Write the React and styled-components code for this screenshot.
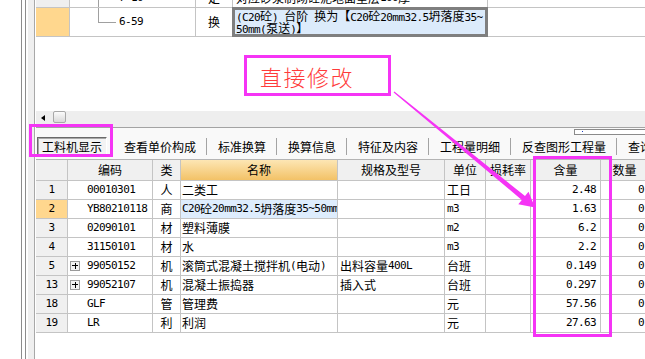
import React from "react";
import styled, { createGlobalStyle } from "styled-components";

const GlobalStyle = createGlobalStyle`
    html, body {
        margin: 0;
        padding: 0;
        overflow: hidden;
        background: #fff;
    }
    body {
        font-family: "Noto Sans CJK SC", sans-serif;
        font-size: 12px;
        color: #000;
    }
`;

const MAGENTA = "#f534f5";
const GRID = "#c4c4c4";

const Page = styled.div`
    position: relative;
    display: flex;
    width: 645px;
    height: 359px;
    overflow: hidden;
    background: #fff;
`;

const Gutter = styled.div`
    display: flex;
    flex: 0 0 35px;
`;

const GutterStrip = styled.div`
    width: ${(props) => props.$w}px;
    background: ${(props) => props.$bg};
`;

const Main = styled.div`
    flex: 1;
    min-width: 0;
    padding-left: 1px;
    display: flex;
    flex-direction: column;
`;

// half-width ascii, like the bitmap song font of the original
const Half = styled.span`
    font-family: "DejaVu Sans Mono", monospace;
    font-size: 11px;
    letter-spacing: -0.6px;
`;

const Mixed = ({ s }) =>
    s
        .split(/([\x20-\x7e]+)/)
        .filter(Boolean)
        .map((part, i) =>
            /^[\x20-\x7e]+$/.test(part) ? <Half key={i}>{part}</Half> : <span key={i}>{part}</span>
        );

/* ---------- upper grid ---------- */

const TopClip = styled.div`
    height: 37px;
    overflow: hidden;
    flex: 0 0 auto;
`;

const TopGrid = styled.div`
    margin-top: -11px;
    display: grid;
    grid-template-columns: 34px 126px 37px 255px 200px;
    grid-template-rows: 19px 29px;
`;

const TCell = styled.div`
    box-sizing: border-box;
    border-right: ${(props) => (props.$last ? "none" : `1px solid ${GRID}`)};
    border-bottom: 1px solid ${GRID};
    background: ${(props) => props.$bg || "#fff"};
    display: flex;
    align-items: center;
    justify-content: ${(props) => (props.$center ? "center" : "flex-start")};
    padding-left: ${(props) => props.$pl || 0}px;
    white-space: nowrap;
    overflow: hidden;
    line-height: 14px;
`;

const TreeCell = styled(TCell)`
    align-items: stretch;
    padding-left: 28px;
`;

const Connector = styled.div`
    width: 17px;
    height: ${(props) => (props.$full ? "100%" : "14px")};
    border-left: 1px solid #a0a0a0;
    border-bottom: ${(props) => (props.$full ? "none" : "1px solid #a0a0a0")};
    flex: 0 0 auto;
`;

const TreeText = styled.div`
    margin-left: 3px;
    display: flex;
    align-items: center;
`;

const EditCell = styled.div`
    margin: -1px 0 0 -1px;
    border: 3px solid #7f7f7f;
    background: #dcebfb;
    padding: 0 0 0 1px;
    line-height: 12px;
    white-space: nowrap;
    overflow: hidden;
    display: flex;
    flex-direction: column;
    justify-content: center;
`;

const EditLine = styled.div`
    height: 12px;
`;

const Blank = styled.div`
    flex: 0 0 74px;
`;

/* ---------- scroll band + tabs ---------- */

const Band = styled.div`
    flex: 0 0 16px;
    background: #eeeeee;
    display: flex;
    align-items: flex-start;
`;

const ScrollArrow = styled.svg`
    margin: 4px 0 0 5px;
    width: 4px;
    height: 6px;
`;

const Thumb = styled.div`
    margin-left: 8px;
    width: 13px;
    height: 12px;
    box-sizing: border-box;
    border: 1px solid #a8a8a8;
    border-radius: 2px;
    background: linear-gradient(#fbfbfb, #d9d9d9);
`;

const TabBar = styled.div`
    position: relative;
    flex: 0 0 auto;
    height: 25px;
    border-top: 1px solid #a3a3a3;
    background: #f9f9f9;
    display: flex;
    align-items: center;
    padding: 6px 0 0 1px;
    white-space: nowrap;
`;

const ActiveTab = styled.div`
    flex: 0 0 70px;
    height: 19px;
    box-sizing: border-box;
    border: 1px solid;
    border-color: #6a6a6a #ffffff #ffffff #6a6a6a;
    box-shadow: inset 1px 1px 0 #a8a8a8;
    background: #f3f3f3;
    display: flex;
    align-items: center;
    justify-content: center;
    margin-right: 6px;
    line-height: 14px;
`;

const Tab = styled.div`
    flex: 0 0 auto;
    padding: 0 10px 0 11px;
    line-height: 14px;
`;

const TabSep = styled.div`
    flex: 0 0 1px;
    height: 17px;
    background: #a3a3a3;
`;

const MiniBar = styled.div`
    position: absolute;
    left: 538px;
    top: 1px;
    width: 90px;
    height: 6px;
    box-sizing: border-box;
    border: 1px solid #8a8a8a;
    background: #fff;

    &::after {
        content: "";
        position: absolute;
        left: 7px;
        top: 1px;
        width: 1px;
        height: 1px;
        background: #2040c0;
    }
`;

/* ---------- lower table ---------- */

const COLS = "32px 85px 28px 157px 107px 41px 45px 70px 48px";

const Table = styled.div`
    flex: 0 0 auto;
    display: flex;
    flex-direction: column;
    border-top: 1px solid #b4b4b4;
`;

const Row = styled.div`
    display: grid;
    grid-template-columns: ${COLS};
    height: ${(props) => (props.$head ? 21 : 19)}px;
`;

const Cell = styled.div`
    box-sizing: border-box;
    border-right: 1px solid ${GRID};
    border-bottom: 1px solid ${GRID};
    background: ${(props) => props.$bg || "#fff"};
    display: flex;
    align-items: center;
    justify-content: ${(props) =>
        props.$align === "center" ? "center" : props.$align === "right" ? "flex-end" : "flex-start"};
    padding: 0 ${(props) => props.$pr || 0}px 0 ${(props) => props.$pl || 0}px;
    white-space: nowrap;
    overflow: hidden;
    line-height: 14px;
`;

const HeadCell = styled(Cell)`
    background: ${(props) => (props.$hot ? "linear-gradient(#fde6b4, #f3c267)" : "#f0f0f0")};
    justify-content: center;
`;

const PlusBox = styled.span`
    position: relative;
    width: 10px;
    height: 10px;
    box-sizing: border-box;
    border: 1px solid #9a9a9a;
    background: #f2f2f2;
    margin: 0 7px 0 2px;
    flex: 0 0 auto;

    &::before,
    &::after {
        content: "";
        position: absolute;
        background: #000;
    }
    &::before {
        left: 1px;
        top: 3px;
        width: 6px;
        height: 1px;
    }
    &::after {
        left: 3.5px;
        top: 0.5px;
        width: 1px;
        height: 6px;
    }
`;

/* ---------- annotations ---------- */

const Callout = styled.div`
    position: absolute;
    left: 244px;
    top: 55px;
    width: 147px;
    height: 41px;
    box-sizing: border-box;
    border: 3px solid ${MAGENTA};
    background: #fff;
    display: flex;
    align-items: center;
    padding-left: 13px;
    font-size: 22px;
    font-weight: 300;
    letter-spacing: 1.5px;
    color: #ff3b3b;
`;

const Frame = styled.div`
    position: absolute;
    left: ${(props) => props.$x}px;
    top: ${(props) => props.$y}px;
    width: ${(props) => props.$w}px;
    height: ${(props) => props.$h}px;
    box-sizing: border-box;
    border: 3px solid ${MAGENTA};
    pointer-events: none;
`;

const Arrow = styled.svg`
    position: absolute;
    left: 0;
    top: 0;
    width: 645px;
    height: 359px;
    pointer-events: none;
`;

const rows = [
    { n: "1", code: "00010301", kind: "人", name: "二类工", unit: "工日", qty: "2.48", amt: "0.744" },
    {
        n: "2",
        code: "YB80210118",
        kind: "商",
        name: "C20砼20mm32.5坍落度35~50mm(泵送)",
        unit: "m3",
        qty: "1.63",
        amt: "0.489",
        sel: true,
    },
    { n: "3", code: "02090101", kind: "材", name: "塑料薄膜", unit: "m2", qty: "6.2", amt: "0.186" },
    { n: "4", code: "31150101", kind: "材", name: "水", unit: "m3", qty: "2.2", amt: "0.66" },
    {
        n: "5",
        code: "99050152",
        kind: "机",
        name: "滚筒式混凝土搅拌机(电动)",
        spec: "出料容量400L",
        unit: "台班",
        qty: "0.149",
        amt: "0.0447",
        plus: true,
    },
    {
        n: "13",
        code: "99052107",
        kind: "机",
        name: "混凝土振捣器",
        spec: "插入式",
        unit: "台班",
        qty: "0.297",
        amt: "0.0891",
        plus: true,
    },
    { n: "18", code: "GLF", kind: "管", name: "管理费", unit: "元", qty: "57.56", amt: "0.00" },
    { n: "19", code: "LR", kind: "利", name: "利润", unit: "元", qty: "27.63", amt: "0.00" },
];

const tabs = ["查看单价构成", "标准换算", "换算信息", "特征及内容", "工程量明细", "反查图形工程量", "查询"];

const gutter = [
    [21, "#fff"],
    [1, "#8c8c8c"],
    [3, "#fff"],
    [1, "#8c8c8c"],
    [2, "#fff"],
    [6, "#efefef"],
    [1, "#a8a8a8"],
];

const App = () => (
    <Page>
        <GlobalStyle />
        <Gutter>
            {gutter.map(([w, bg], i) => (
                <GutterStrip key={i} $w={w} $bg={bg} />
            ))}
        </Gutter>
        <Main>
            <TopClip>
                <TopGrid>
                    <TCell $bg="#efefef" />
                    <TreeCell>
                        <Connector $full />
                        <TreeText>
                            <Mixed s="7-10" />
                        </TreeText>
                    </TreeCell>
                    <TCell $center>定</TCell>
                    <TCell $pl={3}>
                        <Mixed s="对应砂浆制砌砼泥地面垫层 100厚" />
                    </TCell>
                    <TCell $last />

                    <TCell $bg="#ffd78e" />
                    <TreeCell>
                        <Connector />
                        <TreeText>
                            <Mixed s="6-59" />
                        </TreeText>
                    </TreeCell>
                    <TCell $center>换</TCell>
                    <EditCell>
                        <EditLine>
                            <Mixed s="(C20砼) 台阶 换为【C20砼20mm32.5坍落度35~" />
                        </EditLine>
                        <EditLine>
                            <Mixed s="50mm(泵送)】" />
                        </EditLine>
                    </EditCell>
                    <TCell $last />
                </TopGrid>
            </TopClip>

            <Blank />

            <Band>
                <ScrollArrow viewBox="0 0 4 6">
                    <polygon points="4,0 4,6 0,3" fill="#000" />
                </ScrollArrow>
                <Thumb />
            </Band>

            <TabBar>
                <ActiveTab>工料机显示</ActiveTab>
                {tabs.map((t, i) => (
                    <React.Fragment key={t}>
                        {i > 0 && <TabSep />}
                        <Tab>{t}</Tab>
                    </React.Fragment>
                ))}
                <MiniBar />
            </TabBar>

            <Table>
                <Row $head>
                    <HeadCell />
                    <HeadCell>编码</HeadCell>
                    <HeadCell>类</HeadCell>
                    <HeadCell $hot>名称</HeadCell>
                    <HeadCell>规格及型号</HeadCell>
                    <HeadCell>单位</HeadCell>
                    <HeadCell>损耗率</HeadCell>
                    <HeadCell>含量</HeadCell>
                    <HeadCell>数量</HeadCell>
                </Row>
                {rows.map((r) => (
                    <Row key={r.n}>
                        <Cell $align="center" $bg={r.sel ? "#ffd78e" : "#f0f0f0"}>
                            <Half>{r.n}</Half>
                        </Cell>
                        <Cell $pl={r.plus ? 0 : 19}>
                            {r.plus && <PlusBox />}
                            <Half>{r.code}</Half>
                        </Cell>
                        <Cell $align="center">{r.kind}</Cell>
                        <Cell $pl={1} $bg={r.sel ? "#deedfd" : undefined}>
                            <Mixed s={r.name} />
                        </Cell>
                        <Cell $pl={2}>{r.spec && <Mixed s={r.spec} />}</Cell>
                        <Cell $pl={2}>
                            <Mixed s={r.unit} />
                        </Cell>
                        <Cell />
                        <Cell $align="right" $pr={4}>
                            <Half>{r.qty}</Half>
                        </Cell>
                        <Cell $pl={37}>
                            <Half>{r.amt}</Half>
                        </Cell>
                    </Row>
                ))}
            </Table>
        </Main>

        <Callout>直接修改</Callout>
        <Frame $x={29} $y={124} $w={84} $h={33} />
        <Frame $x={533} $y={156} $w={79} $h={181} />
        <Arrow viewBox="0 0 645 359">
            <polygon
                points="394.4,91.5 525,196.1 528.5,191.8 535,207.5 518.3,204.2 521.8,199.9 393.6,92.5"
                fill={MAGENTA}
            />
        </Arrow>
    </Page>
);

export default App;
